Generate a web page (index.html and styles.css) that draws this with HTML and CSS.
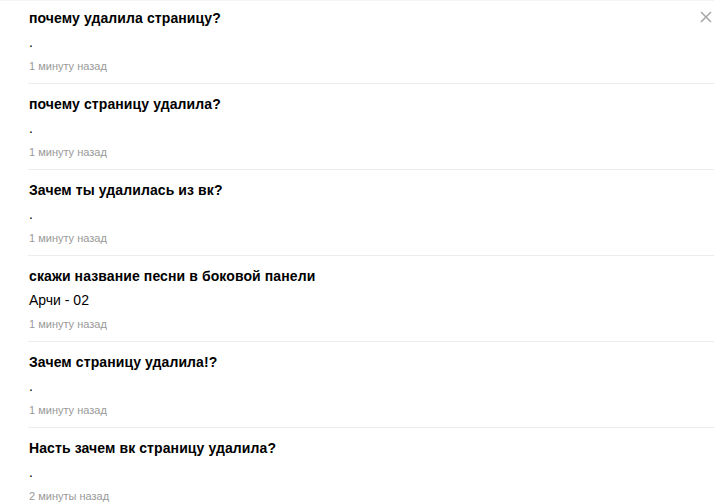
FILE: index.html
```html
<!DOCTYPE html>
<html lang="ru">
<head>
  <meta charset="UTF-8">
  <title>Вопросы</title>
  <link rel="stylesheet" href="styles.css">
</head>
<body>
  <div class="panel">
    <button class="close" title="Закрыть">
      <svg width="12" height="12" viewBox="0 0 12 12"><path d="M1 1L11 11M11 1L1 11" stroke="#a8a8a8" stroke-width="1.6" fill="none"/></svg>
    </button>
    <ul class="questions">
      <li class="question">
        <div class="title">почему удалила страницу?</div>
        <div class="answer">.</div>
        <div class="time">1 минуту назад</div>
      </li>
      <li class="question">
        <div class="title">почему страницу удалила?</div>
        <div class="answer">.</div>
        <div class="time">1 минуту назад</div>
      </li>
      <li class="question">
        <div class="title">Зачем ты удалилась из вк?</div>
        <div class="answer">.</div>
        <div class="time">1 минуту назад</div>
      </li>
      <li class="question">
        <div class="title">скажи название песни в боковой панели</div>
        <div class="answer">Арчи - 02</div>
        <div class="time">1 минуту назад</div>
      </li>
      <li class="question">
        <div class="title">Зачем страницу удалила!?</div>
        <div class="answer">.</div>
        <div class="time">1 минуту назад</div>
      </li>
      <li class="question">
        <div class="title">Насть зачем вк страницу удалила?</div>
        <div class="answer">.</div>
        <div class="time">2 минуты назад</div>
      </li>
    </ul>
  </div>
</body>
</html>
```

FILE: styles.css
```css
body {
  margin: 0;
  background: #ffffff;
  font-family: "Liberation Sans", Arial, sans-serif;
  color: #000;
  overflow: hidden;
}
.panel {
  position: relative;
  padding-left: 28px;
  width: 686px;
  border-top: 1px solid #f4f4f4;
}
.close {
  position: absolute;
  top: 10px;
  left: 700px;
  width: 12px;
  height: 12px;
  padding: 0;
  border: none;
  background: none;
  cursor: pointer;
}
.close svg {
  display: block;
}
.questions {
  list-style: none;
  margin: -3px 0 0;
  padding: 0;
}
.question {
  padding: 12px 0 10px 1px;
  border-bottom: 1px solid #ececec;
}
.title {
  font-size: 14px;
  font-weight: bold;
  line-height: 16px;
  letter-spacing: 0.1px;
}
.answer {
  margin-top: 7px;
  font-size: 14px;
  line-height: 18px;
}
.time {
  margin-top: 9px;
  font-size: 11px;
  line-height: 13px;
  color: #999;
}
```
